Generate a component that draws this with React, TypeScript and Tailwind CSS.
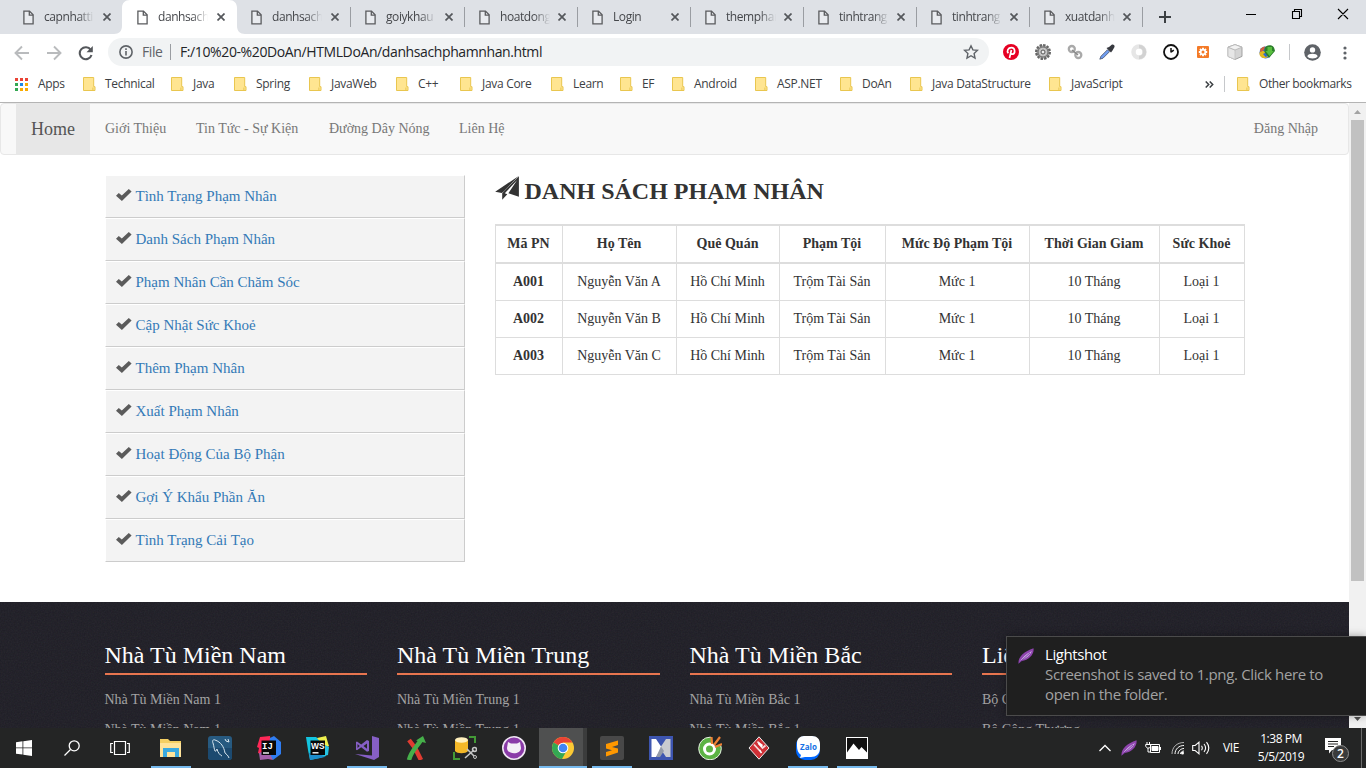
import React from "react";

const UI = "font-['Open_Sans','Noto_Sans',sans-serif]";
const SERIF = "font-['Liberation_Serif',serif]";

/* ---------- Tab strip ---------- */

const FileIcon = () => (
  <svg className="h-[15px] w-[11px] shrink-0" viewBox="0 0 11 15" fill="none" stroke="#5a5b5e" strokeWidth="1.3">
    <path d="M.9 1.1h5.6l3.6 3.7v9H.9z" fill="#fff" fillOpacity=".35" />
    <path d="M6.3 1.1v4h3.8" />
  </svg>
);

const CloseIcon = () => (
  <svg className="h-2 w-2 shrink-0" viewBox="0 0 8 8" stroke="#54575b" strokeWidth="1.7">
    <path d="M.5.5l7 7M7.5.5l-7 7" />
  </svg>
);

const tabs = [
  { t: "capnhatti", w: "w-[114px]", gap: "w-[9px]", line: false, active: false },
  { t: "danhsach", w: "w-[114px]", gap: "w-[9px]", line: false, active: true },
  { t: "danhsach", w: "w-[114px]", gap: "w-[9px]", line: false, active: false },
  { t: "goiykhau", w: "w-[114px]", gap: "w-[9px]", line: true, active: false },
  { t: "hoatdong", w: "w-[113px]", gap: "w-2", line: true, active: false },
  { t: "Login", w: "w-[113px]", gap: "w-2", line: true, active: false },
  { t: "themphar", w: "w-[113px]", gap: "w-2", line: true, active: false },
  { t: "tinhtrang", w: "w-[113px]", gap: "w-2", line: true, active: false },
  { t: "tinhtrang", w: "w-[113px]", gap: "w-2", line: true, active: false },
  { t: "xuatdanh", w: "w-[113px]", gap: "w-2", line: true, active: false },
];

const TabStrip = () => (
  <div className="flex h-[34px] bg-[#dee1e6] pl-2">
    {tabs.map((tab, i) => (
      <div key={i} className={`relative flex h-[34px] shrink-0 items-center ${tab.w}`}>
        {tab.active && (
          <svg className="absolute -left-2 top-0 h-[34px] w-[132px]" viewBox="0 0 132 34" fill="#fff">
            <path d="M0 34c5 0 8-3 8-8V8c0-5 3-8 8-8h99c5 0 8 3 8 8v18c0 5 3 8 8 8z" />
          </svg>
        )}
        <div className={`relative h-5 w-px ${tab.line ? "bg-[#9a9da2]" : ""}`} />
        <div className="relative flex items-center pl-[14px]">
          <FileIcon />
          <div className="ml-[10px] w-[50px] whitespace-nowrap text-xs leading-[18px] tracking-[-0.42px] text-[#45474b] [mask-image:linear-gradient(to_right,black_68%,transparent)]">
            {tab.t}
          </div>
          <div className={tab.gap} />
          <CloseIcon />
        </div>
      </div>
    ))}
    <div className="flex flex-1 items-center">
      <div className="h-5 w-px bg-[#9a9da2]" />
      <svg className="ml-4 h-3 w-3" viewBox="0 0 12 12" stroke="#3c4043" strokeWidth="2">
        <path d="M6 0v12M0 6h12" />
      </svg>
      <svg className="ml-[75px] h-7 w-[104px] self-start" viewBox="0 0 104 28" fill="none" stroke="#000" strokeWidth="1.1">
        <path d="M0 14.5h10M46.5 11.500h7v7h-7zM48.5 11.500V9.500h7v7H53.500M92 9l10 10M102 9l-10 10" />
      </svg>
    </div>
  </div>
);

/* ---------- Toolbar ---------- */

const extIcons = [
  <svg viewBox="0 0 16 16"><circle cx="8" cy="8" r="8" fill="#e60023" /><path d="M5.300 9.300C3.500 7 5 3.600 8.400 3.600c4.200 0 4 6.300 1.200 6.600-1.200.1-1.700-.9-1.700-.9M8.400 6l-1.900 8" stroke="#fff" strokeWidth="1.700" fill="none" /></svg>,
  <svg viewBox="0 0 16 16"><circle cx="8" cy="8" r="6.800" fill="#b4b4b4" stroke="#666" strokeWidth="2.400" strokeDasharray="2.400 1.150" /><circle cx="8" cy="8" r="5" fill="#c4c4c4" stroke="#6a6a6a" strokeWidth="1" /><circle cx="8" cy="8" r="2" fill="#eee" stroke="#555" strokeWidth="1" /></svg>,
  <svg viewBox="0 0 16 16" fill="none" stroke="#a9a9a9" strokeWidth="2.300"><circle cx="4.800" cy="5" r="3" /><circle cx="11.300" cy="11" r="3" /><path d="M5 6l6 5" stroke="#888" strokeWidth="1.500" /></svg>,
  <svg viewBox="0 0 16 16"><path d="M.8 15.200l1.200-3 6.500-6.500 2 2-6.500 6.500z" fill="#6f9df0" stroke="#46536f" strokeWidth=".8" /><path d="M7.500 4l4.500 4.500 1.500-2L15.500 3A2 2 0 0 0 13 .5L10 3z" fill="#37393f" /></svg>,
  <svg viewBox="0 0 16 16"><circle cx="8" cy="8" r="5.500" fill="none" stroke="#e6e6e6" strokeWidth="4.500" /><path d="M8 2.500A5.500 5.500 0 0 1 8 13.500" fill="none" stroke="#d2d2d2" strokeWidth="3.500" /></svg>,
  <svg viewBox="0 0 16 16" fill="#fff" stroke="#111"><circle cx="8" cy="8" r="7" strokeWidth="1.800" /><path d="M8 8.400V4M8 8.200l2.800-2" strokeWidth="1.500" fill="none" /></svg>,
  <svg viewBox="0 0 16 16"><rect x="2" y="2" width="12" height="12" rx="1" fill="#f47a27" /><path d="M8 3.800v8.400M3.800 8h8.400M5 5l6 6M11 5l-6 6" stroke="#fff" strokeWidth="1.900" /><circle cx="8" cy="8" r="3" fill="#fff" /><circle cx="8" cy="8" r="1.500" fill="#f47a27" /></svg>,
  <svg viewBox="0 0 16 16" stroke="#9a9a9a" strokeWidth=".9" strokeLinejoin="round"><path d="M8 .6l7 2.600v9.200L8 15.500 1 12.400V3.200z" fill="#d4d4d4" /><path d="M1 3.200L8 6v9.500L1 12.400z" fill="#e6e6e6" stroke="#c4c4c4" /><path d="M1 3.200L8 .6l7 2.600L8 6z" fill="#f2f2f2" stroke="#b8b8b8" /></svg>,
  <svg viewBox="0 0 16 16"><circle cx="6.500" cy="8.500" r="6" fill="#3867d0" /><path d="M.5 9.500c0-2.500 3-3 5-2l4 5C6 15.500.5 14 .5 9.500z" fill="#e3b91d" /><path d="M1 6c1-2 3-3.500 5-3.500L5 6 1.500 8z" fill="#cf5f3e" /><path d="M4 10l3-1.500L9 12l-2.500 1z" fill="#2d6ad0" /><path d="M5.500 5.500C6 0 14.800 0 15.500 5L16 7l-6 7-4.500-6z" fill="#2c7f2b" /><path d="M8.500 3h4.500v4h1.800L10.600 12 6.500 7h2z" fill="#58bf3e" /></svg>,
];

const Toolbar = () => (
  <div className="flex h-9 items-center bg-white pl-[14px]">
    <svg className="mt-px h-4 w-[80px] shrink-0" viewBox="0 0 80 16" fill="none" strokeWidth="1.900">
      <path d="M15 8H2M8 1.500L1.500 8 8 14.500M33 8h13M40 1.500L46.500 8 40 14.500" stroke="#b9bbbd" />
      <path d="M76.700 4.800A6 6 0 1 0 77.500 10" stroke="#54575b" strokeWidth="2.100" />
      <path d="M78.800 1v6.300h-6.300z" fill="#54575b" />
    </svg>
    <div className="ml-[14px] flex h-7 w-[881px] shrink-0 items-center rounded-full bg-[#f1f3f4] pl-[11px] pr-[10px]">
      <svg className="h-[14px] w-[14px]" viewBox="0 0 14 14" fill="none" stroke="#5f6368" strokeWidth="1.600">
        <circle cx="7" cy="7" r="6.100" /><path d="M7 6v4.500M7 3.300v1.600" />
      </svg>
      <span className="ml-[9px] w-[28px] text-sm leading-5 tracking-[-0.4px] text-[#5f6368]">File</span>
      <div className="h-4 w-px bg-[#9a9da2]" />
      <span className="ml-[9px] flex-1 whitespace-nowrap text-sm leading-5 tracking-[-0.39px] text-[#222427]">
        F:/10%20-%20DoAn/HTMLDoAn/danhsachphamnhan.html
      </span>
      <svg className="h-4 w-4" viewBox="0 0 16 16" fill="none" stroke="#5f6368" strokeWidth="1.400">
        <path d="M8 1.800l1.900 4.100 4.500.5-3.300 3.100.9 4.500L8 11.700 4 14l.9-4.500L1.600 6.400l4.500-.5z" />
      </svg>
    </div>
    <div className="ml-[14px] flex gap-4">
      {extIcons.map((ic, i) => <div key={i} className="h-4 w-4">{ic}</div>)}
    </div>
    <div className="ml-[14px] h-4 w-px bg-[#c6c8cb]" />
    <svg className="ml-[14px] h-[17px] w-[17px]" viewBox="0 0 17 17">
      <circle cx="8.500" cy="8.500" r="8.300" fill="#5f6368" />
      <circle cx="8.500" cy="5.900" r="2.700" fill="#fff" />
      <path d="M3.300 12.200c1.200-3.200 9.200-3.200 10.400 0-1.600 2.900-8.800 2.900-10.400 0z" fill="#fff" />
    </svg>
    <svg className="ml-[22px] mt-px h-[14px] w-1" viewBox="0 0 4 14" fill="#5f6368">
      <circle cx="2" cy="2" r="1.600" /><circle cx="2" cy="7" r="1.600" /><circle cx="2" cy="12" r="1.600" />
    </svg>
  </div>
);

/* ---------- Bookmarks ---------- */

const Folder = () => (
  <svg className="h-[14px] w-[13px] shrink-0" viewBox="0 0 13 14">
    <path d="M.5.5h10.200v9.200h1.300v3.800H.5z" fill="#ffe591" stroke="#e9c64f" />
    <path d="M9.900 13.300V10.500" stroke="#e9c64f" />
  </svg>
);

const bookmarks = [
  ["Technical", "w-[88px]"], ["Java", "w-[63px]"], ["Spring", "w-[75px]"], ["JavaWeb", "w-[87px]"],
  ["C++", "w-[64px]"], ["Java Core", "w-[91px]"], ["Learn", "w-[69px]"], ["EF", "w-[52px]"],
  ["Android", "w-[83px]"], ["ASP.NET", "w-[85px]"], ["DoAn", "w-[70px]"], ["Java DataStructure", "w-[139px]"],
  ["JavaScript", "w-[156px]"],
];

const appDots = ["#ea4335", "#ea4335", "#ea4335", "#34a853", "#1e88e5", "#f9ab00", "#34a853", "#f9ab00", "#f9ab00"];

const Bookmarks = () => (
  <div className="flex h-8 items-center bg-white pb-1 pl-[15px] text-xs text-[#3c4043]">
    <svg className="h-[13px] w-[13px] shrink-0" viewBox="0 0 13 13">
      {appDots.map((c, i) => <rect key={i} x={(i % 3) * 5} y={Math.floor(i / 3) * 5} width="3" height="3" fill={c} />)}
    </svg>
    <span className="ml-[10px] w-[45px] shrink-0 tracking-[-0.3px]">Apps</span>
    {bookmarks.map(([t, w]) => (
      <div key={t} className={`flex shrink-0 items-center whitespace-nowrap ${w}`}>
        <Folder />
        <span className="ml-[9px] tracking-[-0.3px]">{t}</span>
      </div>
    ))}
    <svg className="h-[7px] w-[9px] shrink-0" viewBox="0 0 9 7" fill="none" stroke="#3c4043" strokeWidth="1.500">
      <path d="M.7.5l3 3-3 3M4.700.5l3 3-3 3" />
    </svg>
    <div className="ml-[10px] h-4 w-px shrink-0 bg-[#c6c8cb]" />
    <div className="ml-3 flex items-center whitespace-nowrap">
      <Folder />
      <span className="ml-[9px] tracking-[-0.4px]">Other bookmarks</span>
    </div>
  </div>
);

/* ---------- Page ---------- */

const Navbar = () => (
  <nav className="mb-5 flex h-[52px] rounded-[4px] border border-[#e7e7e7] bg-[#f8f8f8] pl-[15px] pr-[15px] text-sm leading-[50px] text-[#777]">
    <div className="w-[74px] bg-[#e7e7e7] text-center text-lg leading-[50px] text-[#555]">Home</div>
    <span className="ml-[15px] w-[91px]">Giới Thiệu</span>
    <span className="w-[133px]">Tin Tức - Sự Kiện</span>
    <span className="w-[130px]">Đường Dây Nóng</span>
    <span>Liên Hệ</span>
    <span className="ml-auto mr-[15px]">Đăng Nhập</span>
  </nav>
);

const menu = [
  "Tình Trạng Phạm Nhân", "Danh Sách Phạm Nhân", "Phạm Nhân Cần Chăm Sóc", "Cập Nhật Sức Khoẻ", "Thêm Phạm Nhân",
  "Xuất Phạm Nhân", "Hoạt Động Của Bộ Phận", "Gợi Ý Khẩu Phần Ăn", "Tình Trạng Cải Tạo",
];

const Sidebar = () => (
  <ul className="w-[360px] shrink-0">
    {menu.map((m) => (
      <li key={m} className="flex h-[43px] items-center border border-b-[#ccc] border-l-white border-r-[#ccc] border-t-white bg-[#f3f3f3] pl-[10px] text-[15px] text-[#337ab7]">
        <svg className="mb-[3px] mr-[3.5px] h-3 w-4" viewBox="0 0 16 12" fill="#5b5b5b">
          <path d="M0 6.800L2.800 3.900 5.800 6.500 12.800 0 15.600 2.600 5.900 12z" />
        </svg>
        <a>{m}</a>
      </li>
    ))}
  </ul>
);

const head = ["Mã PN", "Họ Tên", "Quê Quán", "Phạm Tội", "Mức Độ Phạm Tội", "Thời Gian Giam", "Sức Khoẻ"];
const rows = [["A001", "A"], ["A002", "B"], ["A003", "C"]].map(([id, n]) => [
  id, `Nguyễn Văn ${n}`, "Hồ Chí Minh", "Trộm Tài Sản", "Mức 1", "10 Tháng", "Loại 1",
]);

const DataTable = () => (
  <div className="grid w-[750px] grid-cols-[67px_114px_103px_106px_144px_130px_85px] border-l border-t-2 border-[#ddd] text-center text-sm leading-9 text-[#333]">
    {head.map((h) => <div key={h} className="h-[38px] border-b-2 border-r border-[#ddd] pr-px font-bold">{h}</div>)}
    {rows.flatMap((r, i) =>
      r.map((c, j) => (
        <div key={`${i}-${j}`} className={`h-[37px] border-b border-r border-[#ddd] pr-px ${j === 0 ? "font-bold" : ""}`}>{c}</div>
      )),
    )}
  </div>
);

const Content = () => (
  <section className="ml-[30px]">
    <h1 className="flex h-[49px] items-start text-2xl font-bold leading-8 text-[#333]">
      <svg className="mr-[5.5px] mt-px h-6 w-6" viewBox="0 0 24 24" fill="#333">
        <path d="M.2 15.700L23.700 0 9 15.200 6.800 17z" />
        <path d="M23.900.2V20.800L13.400 17.200 22 4.200 9.800 17.200 12.300 18.200 7.200 23.700V17.300z" />
      </svg>
      <span>DANH SÁCH PHẠM NHÂN</span>
    </h1>
    <DataTable />
  </section>
);

const footerCols = [
  { h: "Nhà Tù Miền Nam", l: ["Nhà Tù Miền Nam 1", "Nhà Tù Miền Nam 1"] },
  { h: "Nhà Tù Miền Trung", l: ["Nhà Tù Miền Trung 1", "Nhà Tù Miền Trung 1"] },
  { h: "Nhà Tù Miền Bắc", l: ["Nhà Tù Miền Bắc 1", "Nhà Tù Miền Bắc 1"] },
  { h: "Liên Kết", l: ["Bộ Công An", "Bộ Công Thương"] },
];

const Footer = () => (
  <footer className="relative h-[126px] overflow-hidden bg-[#1e1d25]">
    <svg className="absolute inset-0 h-full w-full opacity-[0.07]">
      <filter id="grain"><feTurbulence type="fractalNoise" baseFrequency="0.7" numOctaves="2" /></filter>
      <rect width="100%" height="100%" filter="url(#grain)" />
    </svg>
    <div className="relative grid grid-cols-[292.5px_292.5px_292.5px_292.5px] pl-[104.5px] pt-[36px]">
      {footerCols.map((c) => (
        <div key={c.h} className="w-[262.5px]">
          <h3 className="h-[37px] border-b-2 border-[#e8754f] text-2xl leading-[34px] text-white">{c.h}</h3>
          <div className="pt-[10px] text-sm leading-[30px] text-[#a3a3a3]">
            {c.l.map((l, i) => <div key={i}>{l}</div>)}
          </div>
        </div>
      ))}
    </div>
  </footer>
);

const Scrollbar = () => (
  <div className="flex w-[17px] shrink-0 flex-col items-center bg-[#f1f1f1]">
    <svg className="h-[17px] w-[17px]" viewBox="0 0 17 17" fill="#a3a3a3"><path d="M5 11l3.500-4 3.500 4z" /></svg>
    <div className="h-[461px] w-[13px] bg-[#c1c1c1]" />
    <svg className="mt-auto h-[17px] w-[17px]" viewBox="0 0 17 17" fill="#505050"><path d="M5 6l3.500 4L12 6z" /></svg>
  </div>
);

/* ---------- Notification & taskbar ---------- */

const Feather = () => (
  <svg className="h-4 w-4 shrink-0" viewBox="0 0 16 16">
    <path d="M.5 15.500C0 9 6 3.500 15.500.3 16.500 6 11 12 3.500 13z" fill="#8e44ad" />
    <path d="M1 15C4 9.500 8 6 14 3 12 7.500 8 10.500 3 12.500z" fill="#cfaee8" />
    <path d="M.8 15.200L12 4.800" stroke="#7a3a9f" strokeWidth="1" />
  </svg>
);

const Toast = () => (
  <div className={`absolute right-0 top-[636px] z-10 flex h-[80px] w-[360px] border border-r-0 border-[#4b4b4b] bg-[#1f1f1f] pl-[11px] pt-[11px] shadow-[0_0_8px_rgba(0,0,0,.35)] ${UI}`}>
    <Feather />
    <div className="ml-[11px] -mt-1 whitespace-nowrap text-[15px] leading-5 text-[#a2a2a2]">
      <div className="tracking-[-0.4px] text-white">Lightshot</div>
      <div className="tracking-[-0.35px]">Screenshot is saved to 1.png. Click here to</div>
      <div className="tracking-[-0.35px]">open in the folder.</div>
    </div>
  </div>
);

const S = ({ children }: { children: React.ReactNode }) => <svg className="h-6 w-6" viewBox="0 0 24 24">{children}</svg>;

const apps = [
  { bar: "w-10", icon: <S><path d="M1 3h8l2 2h11v16H1z" fill="#f4cf63" /><path d="M1 7h21v14H1z" fill="#ffe39a" /><path d="M4 12h16v9h-4v-5H8v5H4z" fill="#3aa9e0" /></S> },
  { bar: "", icon: <S><rect width="24" height="24" rx="3" fill="#275a80" /><path d="M0 12h24v9a3 3 0 0 1-3 3H3a3 3 0 0 1-3-3z" fill="#1c4a70" /><path d="M21 22c-1-3-3-4-4-5C16 11 13 6 7 4 5 3 4 5 5 7c1 3 1 6 2 8 1 1 1-1 2-2 1 4 3 6 5 7M17 3l1 2 3 1-1-3" fill="none" stroke="#d8e6ef" strokeWidth="1" /></S> },
  { bar: "", icon: <S><path d="M3 1l10-1 1 8L6 19 1 17l1-5-2-1z" fill="#fe2857" /><path d="M13 2l4-2 7 6v12l-8 6-5-6z" fill="#2f7df2" /><path d="M2 17l9-3 5 10-5-1-8 1z" fill="#a35fa9" /><rect x="4.500" y="4.500" width="14.500" height="14.500" fill="#080808" /><g fill="#fff" fontSize="9" fontWeight="700" fontFamily="Liberation Mono"><text x="5" y="12.500">IJ</text></g><path d="M6 17h6" stroke="#fff" strokeWidth="1.400" /></S> },
  { bar: "", icon: <S><path d="M0 1l10 0 4 3 6 16-6 2-10 2L2 14z" fill="#13c5e0" /><path d="M11 2l9-2 2 7 1 3-4 2z" fill="#eef04e" /><path d="M19 9l4 2-1 8-4 1z" fill="#27c3e2" /><path d="M3 17l11 1 5 3-15 3z" fill="#1c8dcb" /><rect x="4.500" y="4.500" width="14.500" height="14.500" fill="#080808" /><g fill="#fff" fontSize="8.500" fontWeight="700" fontFamily="Liberation Sans"><text x="5" y="12.500" textLength="13.500" lengthAdjust="spacingAndGlyphs">WS</text></g><path d="M6.500 16.800h6" stroke="#fff" strokeWidth="1.400" /></S> },
  { bar: "w-10", icon: <S><path d="M17 0l7 2v19l-5 3L0 18l17 1.500z" fill="#865fc5" /><path d="M2 5.500l4.200 3.100L12 4l2 1v10l-2 .8-5.800-4.500L2 14.300l-1-.5V6zM2.500 8v4L4.700 10zM12 7.500L8.500 10l3.500 2.700z" fill="#865fc5" fillRule="evenodd" /></S> },
  { bar: "", icon: <S><path d="M5 4l6 8 6 12" fill="none" stroke="#e03c31" strokeWidth="4.500" /><path d="M5 24C7 15 12 12 17 4" fill="none" stroke="#46b04a" strokeWidth="4.500" /><path d="M12 4.500L19 0l3 7z" fill="#46b04a" /></S> },
  { bar: "", icon: <S><path d="M2 4v11c2 3 11 3 13 0V4z" fill="#f4b827" /><ellipse cx="8.500" cy="4" rx="6.500" ry="2.800" fill="#fff0bd" /><path d="M16 1h6v6M1 16v7h6" fill="none" stroke="#439a36" strokeWidth="2" /><path d="M14 13l8 8M21 14l-9 8" stroke="#c6c6c6" strokeWidth="1.600" /><circle cx="21.500" cy="13.500" r="2" fill="none" stroke="#c6c6c6" strokeWidth="1.500" /><circle cx="22" cy="21" r="1.500" fill="#242525" stroke="#c6c6c6" /></S> },
  { bar: "", icon: <S><circle cx="12" cy="12" r="11.200" fill="#8a3ba8" stroke="#efe6f3" strokeWidth="1.600" /><path d="M6 6l3 1.500h6L18 6l1 6c0 7-14 7-14 0z" fill="#f4eff6" /></S> },
  { bar: "w-12", icon: <S><circle cx="12" cy="12" r="11" fill="#fcc934" /><path d="M12 12L2.500 6.500A11 11 0 0 1 21.500 6.500H12z" fill="#e94335" /><path d="M12 12L2.500 6.500A11 11 0 0 0 11 23l5-9z" fill="#34a853" /><circle cx="12" cy="12" r="5.300" fill="#fff" /><circle cx="12" cy="12" r="4.300" fill="#4285f4" /></S> },
  { bar: "w-10", icon: <S><rect width="24" height="24" rx="2" fill="#484848" /><path d="M6 8l12-3.500V9l-6 2 6 1.500v4L6 20.500V16l6-1.800L6 12.500z" fill="#ff9800" /></S> },
  { bar: "", icon: <S><rect width="24" height="24" fill="#3d55b0" /><path d="M2.500 3H7l6 9-6 9H2.500z" fill="#fff" /><path d="M21.500 3H17l-6 9 6 9h4.500z" fill="#c9cbd0" /><path d="M12 10.500l3 4.500-4 6H8l-.5-1z" fill="#939aa9" /></S> },
  { bar: "", icon: <S><circle cx="12" cy="12.500" r="11.300" fill="#5cb344" stroke="#e8f3e4" /><path d="M13 0h11v9.500h-8z" fill="#242525" /><circle cx="11.500" cy="13" r="5" fill="none" stroke="#fff" strokeWidth="3" /><path d="M14 8l-.5-7M16 9l6-8M17 11l7-3" stroke="#ef8034" strokeWidth="2.200" /></S> },
  { bar: "", icon: <S><path d="M12 .8L22 12 12 23.200 2 12z" fill="#cf2f35" stroke="#eee" strokeWidth="1" /><path d="M7 8.500l6 6.500M10.500 5.500L15.500 12l3-2.500" fill="none" stroke="#f8dede" strokeWidth="1.700" /><path d="M12 6l4 3-1.500 2.500L11 8z" fill="#fff" /><path d="M12.500 14l2 3" stroke="#fff" strokeWidth="1.500" /></S> },
  { bar: "w-10", icon: <S><rect width="24" height="24" rx="9" fill="#0068ff" /><path d="M1 7c0-4 3-7 7-7h8c5 0 8 3 8 8v4c0 6-4 9-9 9H9l-5 1 1-3c-3-2-4-5-4-9z" fill="#fff" /><g fill="#1671e5" fontSize="8" fontWeight="700" fontFamily="Open Sans"><text x="4" y="14" textLength="17">Zalo</text></g></S> },
  { bar: "w-10", icon: <S><rect x="1.500" y="1.500" width="21" height="21" fill="#111" stroke="#fff" /><path d="M2 16.500l6.500-9 5.500 6.500 2.500-3L22 16.500V22H2z" fill="#fff" /></S> },
];

const Taskbar = () => (
  <div className={`flex h-10 bg-[#242525] text-xs text-white ${UI}`}>
    <div className="flex w-12 items-center justify-center">
      <svg className="h-4 w-4" viewBox="0 0 16 16" fill="#fff"><path d="M0 2.200L6.500 1.300v6.200H0zM7.300 1.200L16 0v7.500H7.300zM0 8.300h6.500v6.300L0 13.700zM7.300 8.300H16V16l-8.700-1.200z" /></svg>
    </div>
    <div className="flex w-12 items-center justify-center">
      <svg className="h-4 w-4" viewBox="0 0 16 16" fill="none" stroke="#fff" strokeWidth="1.300"><circle cx="10.200" cy="5.800" r="5" /><path d="M6.500 9.500L.5 15.500" /></svg>
    </div>
    <div className="flex w-12 items-center justify-center">
      <svg className="h-4 w-5" viewBox="0 0 20 16" fill="none" stroke="#fff" strokeWidth="1.200"><path d="M4.500 1.500h11v13h-11zM3 3.500H.7v9H3M17 3.500h2.300v9H17" /></svg>
    </div>
    <div className="flex pl-[3px]">
      {apps.map((a, i) => (
        <div key={i} className={`relative mr-px flex h-10 w-[48px] items-center justify-center ${i === 8 ? "bg-[linear-gradient(to_right,#4f5050_44px,#3b3c3c_44px)]" : ""}`}>
          {a.icon}
          {a.bar && <div className={`absolute bottom-0 left-1/2 h-0.5 -translate-x-1/2 bg-[#76b9ed] ${a.bar}`} />}
        </div>
      ))}
    </div>
    <div className="ml-auto flex items-center">
      <svg className="h-2 w-3" viewBox="0 0 12 8" fill="none" stroke="#fff" strokeWidth="1.300"><path d="M.5 7L6 1.500 11.500 7" /></svg>
      <div className="ml-[10px]"><Feather /></div>
      <svg className="ml-2 h-3 w-4" viewBox="0 0 16 12" fill="none" stroke="#fff"><path d="M5.500 2.500h9v8h-9zM2 0v2M4.500 0v2M.7 2.500h5v2L4.500 6h-2L.7 4.500zM3 6v4h2.500M15.500 5v3" /><path d="M7 4.500h6v4H7z" fill="#fff" /></svg>
      <svg className="ml-[10px] h-[14px] w-[14px]" viewBox="0 0 14 14" fill="none" stroke="#fff"><path d="M1 13C1 6 6 1.500 13 1.500" opacity=".65" /><path d="M4 13c0-5 4-8.500 9-8.500M7 13c0-3 3-5.500 6-5.500" /><circle cx="11.500" cy="12" r="1.500" fill="#fff" stroke="none" /><path d="M9.500 13c0-1.500 1.500-3 3.500-3" /></svg>
      <svg className="ml-[7px] h-[14px] w-[18px]" viewBox="0 0 18 14" fill="none" stroke="#fff" strokeWidth="1.100"><path d="M.7 4.500h2.500L7 1.200v11.600L3.200 9.500H.7zM9.500 4.800c1 1.400 1 3 0 4.400M12 3c2 2.500 2 5.500 0 8M14.500 1.200c3 3.800 3 7.800 0 11.600" /></svg>
      <span className="ml-[13px] w-[28px] tracking-[-0.4px]">VIE</span>
      <div className="w-[60px] text-center leading-[18px]">
        <div className="tracking-[-0.45px]">1:38 PM</div>
        <div className="tracking-[-0.45px]">5/5/2019</div>
      </div>
      <svg className="ml-[14px] mt-1 h-6 w-[25px]" viewBox="0 0 25 24">
        <path d="M0 0h16v12H7l-3 3.500V12H0z" fill="#fff" />
        <path d="M3 3.500h10M3 6h10M3 8.500h6" stroke="#242525" strokeWidth="1" />
        <circle cx="15.500" cy="15.500" r="8" fill="#3a3b3b" stroke="#8e8e8e" strokeWidth="1" />
        <g fill="#fff" fontSize="12" fontWeight="600" fontFamily="Open Sans"><text x="12" y="20">2</text></g>
      </svg>
      <div className="ml-[11px] mr-1 h-10 w-px bg-[#6b6b6b]" />
    </div>
  </div>
);

export default function App() {
  return (
    <div className="relative flex h-[768px] w-[1366px] flex-col overflow-hidden bg-white">
      <header className={`shrink-0 border-b border-[#b4b4b4] ${UI}`}>
        <TabStrip />
        <Toolbar />
        <Bookmarks />
      </header>
      <div className="flex h-[625px] shrink-0">
        <main className={`flex w-[1349px] flex-col ${SERIF}`}>
          <Navbar />
          <div className="flex flex-1 pl-[105px]">
            <Sidebar />
            <Content />
          </div>
          <Footer />
        </main>
        <Scrollbar />
      </div>
      <Taskbar />
      <Toast />
    </div>
  );
}
